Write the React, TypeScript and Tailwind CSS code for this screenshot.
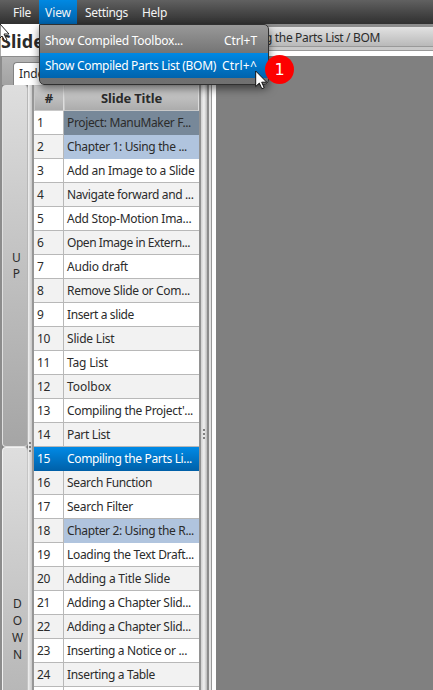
import React, { useLayoutEffect, useRef } from "react";

type LabelProps = { text: string; width: number; className?: string };

// Spreads the letters so that the label fills its column width.
function Label({ text, width, className = "" }: LabelProps) {
  const ref = useRef<HTMLSpanElement>(null);
  useLayoutEffect(() => {
    const el = ref.current;
    if (!el) return;
    el.style.letterSpacing = "0px";
    const natural = el.getBoundingClientRect().width;
    el.style.letterSpacing = `${(width - natural) / text.length}px`;
  }, [text, width]);
  return <span ref={ref} className={`inline-block shrink-0 whitespace-pre ${className}`}>{text}</span>;
}

const rows: [string, number][] = [
  ["Project: ManuMaker F...", 124],
  ["Chapter 1: Using the ...", 120],
  ["Add an Image to a Slide", 127.5],
  ["Navigate forward and ...", 126.5],
  ["Add Stop-Motion Ima...", 124.5],
  ["Open Image in Extern...", 123],
  ["Audio draft", 61],
  ["Remove Slide or Com...", 123],
  ["Insert a slide", 67],
  ["Slide List", 47.5],
  ["Tag List", 41],
  ["Toolbox", 44],
  ["Compiling the Project'...", 126],
  ["Part List", 43],
  ["Compiling the Parts Li...", 125],
  ["Search Function", 85],
  ["Search Filter", 66],
  ["Chapter 2: Using the R...", 127],
  ["Loading the Text Draft...", 127],
  ["Adding a Title Slide", 103],
  ["Adding a Chapter Slid...", 124],
  ["Adding a Chapter Slid...", 124],
  ["Inserting a Notice or ...", 120],
  ["Inserting a Table", 88],
  ["", 0],
];

function Row({ index, title, width }: { index: number; title: string; width: number }) {
  const selected = index === 15;
  const base = selected
    ? "bg-linear-to-b from-[#008ae6] to-[#0060a8] text-white"
    : index % 2 ? "bg-white" : "bg-[#f2f2f2]";
  const titleBg = index === 1 ? "bg-[#778899]" : index === 2 || index === 18 ? "bg-[#b0c4de]" : "";
  const line = selected ? "border-[#0060a8]" : "border-b-[#b8b8b8]";
  const side = selected ? "border-r-transparent" : "border-r-[#b8b8b8]";
  return (
    <div className={`flex h-6 shrink-0 ${base}`}>
      <div className={`w-[30px] shrink-0 border-r border-b pl-[3px] leading-6 ${line} ${side}`}>
        {title && <Label text={String(index)} width={index > 9 ? 13 : 6.5} />}
      </div>
      <div className={`flex-1 border-b pl-[3px] leading-6 ${selected ? "border-[#0060a8]" : titleBg ? "border-transparent" : "border-[#b8b8b8]"} ${titleBg}`}>
        {title && <Label text={title} width={width} />}
      </div>
    </div>
  );
}

function Pointer({ className }: { className: string }) {
  return (
    <svg className={className} width="13" height="20" viewBox="0 0 13 20">
      <path d="M.7 1v15.5l3.6-3.4 2.5 5.6 2.4-1-2.5-5.5h5z" fill="white" stroke="#111" strokeWidth="1" />
    </svg>
  );
}

function Grip() {
  return (
    <div className="flex flex-col gap-[2px]">
      <i className="h-[2px] w-[2px] bg-[#808080]" />
      <i className="h-[2px] w-[2px] bg-[#808080]" />
      <i className="h-[2px] w-[2px] bg-[#808080]" />
    </div>
  );
}

export default function App() {
  return (
    <div className="relative flex h-[690px] w-[433px] flex-col overflow-hidden bg-[#808080] font-['Noto_Sans','Open_Sans',sans-serif] text-[12px] text-[#2b2b2b]">
      <nav className="flex h-6 shrink-0 bg-linear-to-b from-[#616161] to-[#303030] leading-[25px] text-[#f4f4f4]">
        <div className="w-[39px] pl-[13px]"><Label text="File" width={18} /></div>
        <div className="w-[38px] bg-linear-to-b from-[#0089e3] to-[#0061aa] pl-[6px]"><Label text="View" width={26} /></div>
        <div className="w-[57px] pl-[8px]"><Label text="Settings" width={43} /></div>
        <div className="pl-[8px]"><Label text="Help" width={25} /></div>
      </nav>

      <header className="flex h-[61px] shrink-0">
        <div className="flex w-[211px] flex-col">
          <div className="h-8 shrink-0 border-l border-[#aaa] bg-white text-[18px] font-bold leading-[35px]"><Label text="Slide" width={43} /></div>
          <div className="flex flex-1 border-t border-l-2 border-[#8c8c8c] bg-linear-to-b from-[#b5b5b5] to-[#a2a2a2] pt-[5px] pl-[11px]">
            <div className="w-12 rounded-tl-[4px] border-t border-l border-[#828282] bg-white pl-[5px] leading-[21px]"><Label text="Index" width={31} /></div>
          </div>
        </div>
        <div className="flex flex-1 flex-col border-t-[3px] border-[#8c8c8c]">
          <div className="flex h-5 shrink-0 border-b border-[#999] bg-linear-to-b from-[#e2e2e2] to-[#b9b9b9] pl-[54px] leading-[21px]"><Label text="g the Parts List / BOM" width={115} /></div>
          <div className="h-1 shrink-0 border-b border-[#999] bg-[#c9c9c9]" />
          <div className="h-[5px] shrink-0 bg-white" />
        </div>
      </header>

      <main className="flex min-h-0 flex-1">
        <aside className="flex w-[28px] shrink-0 flex-col border-l-2 border-[#8c8c8c]">
          <div className="flex h-[362px] shrink-0 flex-col items-center justify-center rounded border border-[#e0e0e0] border-r-[#b8b8b8] bg-linear-to-b from-[#dedede] to-[#a5a5a5] pl-[3px] leading-[16px]">
            <span>U</span><span>P</span>
          </div>
          <div className="flex h-[362px] shrink-0 flex-col items-center rounded border border-[#f2f2f2] border-r-[#c5c5c5] bg-linear-to-b from-[#dedede] to-[#a5a5a5] pt-[147px] pl-[5px] leading-[17px]">
            <span>D</span><span>O</span><span>W</span><span>N</span>
          </div>
        </aside>
        <div className="flex w-[4px] shrink-0 items-center justify-center bg-linear-to-r from-[#f0f0f0] to-[#c8c8c8]">
          <div className="mt-[118px]"><Grip /></div>
        </div>
        <div className="w-[2px] shrink-0 bg-[#969696]" />
        <section className="flex w-[165px] shrink-0 flex-col overflow-hidden">
          <div className="flex h-[26px] shrink-0 bg-linear-to-b from-[#d4d4d4] to-[#aaa] text-[13px] font-bold">
            <div className="w-[30px] border border-[#c9c9c9] border-r-[#ddd] text-center leading-[25px]">#</div>
            <div className="flex-1 border border-[#c9c9c9] border-r-[#ddd] text-center leading-[25px]"><Label text="Slide Title" width={61} /></div>
          </div>
          {rows.map(([title, width], i) => <Row key={i} index={i + 1} title={title} width={width} />)}
        </section>
        <div className="w-[2px] shrink-0 bg-[#929292]" />
        <div className="flex w-[6px] shrink-0 items-center justify-center bg-linear-to-r from-[#d0d0d0] via-[#f1f1f1] to-[#bbb]">
          <div className="mt-[93px]"><Grip /></div>
        </div>
        <div className="w-[2px] shrink-0 bg-[#8c8c8c]" />
        <div className="w-[2px] shrink-0 bg-[#e3e3e3]" />
        <div className="w-[5px] shrink-0 border-l border-[#999] bg-white" />
      </main>

      <div className="absolute top-6 left-[39px] flex h-[61px] w-[230px] flex-col rounded-[5px] rounded-tl-none border border-[#303030] bg-linear-to-b from-[#999] via-[#737373] to-[#707070] pt-[4px] text-white shadow-[0_4px_9px_rgba(0,0,0,0.5)]">
        <div className="flex h-6 shrink-0 items-center justify-between pr-[11px] pl-[5px] leading-6"><Label text="Show Compiled Toolbox..." width={138} /><Label text="Ctrl+T" width={33} /></div>
        <div className="flex h-[25px] shrink-0 items-center justify-between bg-linear-to-b from-[#0089e5] to-[#0063ad] pr-[11px] pl-[5px]"><Label text="Show Compiled Parts List (BOM)" width={171} /><Label text="Ctrl+^" width={35} /></div>
      </div>
      <div className="absolute top-[55px] left-[265px] flex h-[29px] w-[29px] items-center justify-center rounded-full bg-[#fd0000] font-['DejaVu_Sans',sans-serif] text-[16px] text-white">1</div>
      <Pointer className="absolute top-[70px] left-[255px]" />
      <svg className="absolute top-6 left-0" width="12" height="18"><path d="M0 0L9 10H4L7 16L5 17L2 12L0 14Z" fill="white" stroke="#222" /></svg>
    </div>
  );
}
